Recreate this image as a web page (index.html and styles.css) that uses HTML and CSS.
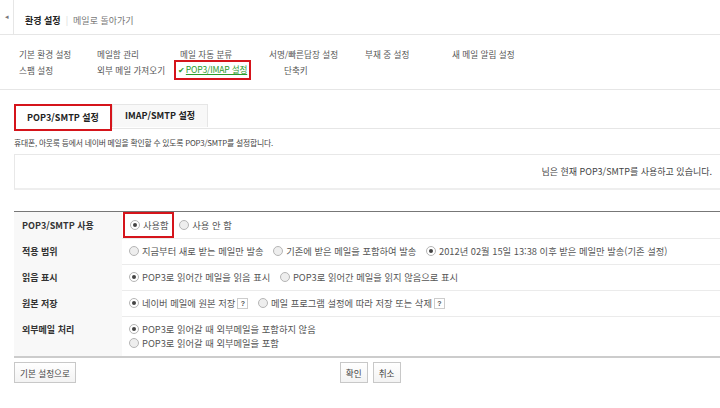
FILE: index.html
```html
<!DOCTYPE html>
<html lang="ko">
<head>
  <meta charset="UTF-8" />
  <title>환경 설정 - POP3/IMAP 설정</title>
  <link rel="stylesheet" href="styles.css">
</head>
<body>

  <!-- 상단 제목 -->
  <div class="top">
    <div class="back">&#9666;</div>
    <div class="title">
      <strong>환경 설정</strong>
      <span class="bar">|</span>
      <a href="#">메일로 돌아가기</a>
    </div>
  </div>

  <!-- 설정 메뉴 -->
  <div class="menu">
    <a href="#">기본 환경 설정</a>
    <a href="#">메일함 관리</a>
    <a href="#">메일 자동 분류</a>
    <a href="#">서명/빠른답장 설정</a>
    <a href="#">부재 중 설정</a>
    <a href="#">새 메일 알림 설정</a>
    <a href="#">스팸 설정</a>
    <a href="#">외부 메일 가져오기</a>
    <a href="#" class="current"><span class="check">&#10004;</span><u>POP3/IMAP 설정</u></a>
    <a href="#" class="shortcut">단축키</a>
  </div>

  <div class="content">
    <div class="tabs">
      <a href="#" class="tab on">POP3/SMTP 설정</a>
      <a href="#" class="tab">IMAP/SMTP 설정</a>
    </div>

    <p class="desc">휴대폰, 아웃룩 등에서 네이버 메일을 확인할 수 있도록 POP3/SMTP를 설정합니다.</p>

    <div class="status">님은 현재 POP3/SMTP를 사용하고 있습니다.</div>

    <table class="setting">
      <tr>
        <th>POP3/SMTP 사용</th>
        <td>
          <label class="opt marked"><span class="radio on"></span>사용함</label>
          <label class="opt"><span class="radio"></span>사용 안 함</label>
        </td>
      </tr>
      <tr>
        <th>적용 범위</th>
        <td>
          <label class="opt"><span class="radio"></span>지금부터 새로 받는 메일만 발송</label>
          <label class="opt"><span class="radio"></span>기존에 받은 메일을 포함하여 발송</label>
          <label class="opt"><span class="radio on"></span>2012년 02월 15일 13:38 이후 받은 메일만 발송(기존 설정)</label>
        </td>
      </tr>
      <tr>
        <th>읽음 표시</th>
        <td>
          <label class="opt"><span class="radio on"></span>POP3로 읽어간 메일을 읽음 표시</label>
          <label class="opt"><span class="radio"></span>POP3로 읽어간 메일을 읽지 않음으로 표시</label>
        </td>
      </tr>
      <tr>
        <th>원본 저장</th>
        <td>
          <label class="opt"><span class="radio on"></span>네이버 메일에 원본 저장<span class="help">?</span></label>
          <label class="opt"><span class="radio"></span>메일 프로그램 설정에 따라 저장 또는 삭제<span class="help">?</span></label>
        </td>
      </tr>
      <tr class="tall">
        <th>외부메일 처리</th>
        <td>
          <label class="opt line"><span class="radio on"></span>POP3로 읽어갈 때 외부메일을 포함하지 않음</label>
          <label class="opt line"><span class="radio"></span>POP3로 읽어갈 때 외부메일을 포함</label>
        </td>
      </tr>
    </table>

    <div class="buttons">
      <button class="btn">기본 설정으로</button>
      <div class="center">
        <button class="btn">확인</button>
        <button class="btn">취소</button>
      </div>
    </div>
  </div>

</body>
</html>
```

FILE: styles.css
```css
/* 기본 */
body {
  margin: 0;
  background: #fff;
  font-family: "Noto Sans CJK KR", "Noto Sans", sans-serif;
  font-size: 9px;
  color: #333;
  overflow: hidden;
}

a {
  color: #555;
  text-decoration: none;
}

/* 상단 제목 */
.top {
  display: flex;
  height: 34px;
  border-bottom: 1px solid #e6e6e6;
}

.back {
  width: 13px;
  border-right: 1px solid #e6e6e6;
  color: #777;
  font-size: 7px;
  line-height: 32px;
  text-align: center;
}

.title {
  display: flex;
  align-items: center;
  padding: 6px 0 0 11px;
  font-size: 9px;
}

.title strong {
  color: #222;
}

.title .bar {
  color: #d8d8d8;
  margin: 0 5px;
}

.title a {
  color: #777;
}

/* 설정 메뉴 */
.menu {
  display: grid;
  grid-template-columns: 78px 83px 89px 96px 87px auto;
  grid-auto-rows: 16px;
  align-items: center;
  padding: 11px 0 11px 19px;
  border-bottom: 1px solid #e6e6e6;
  font-size: 8.6px;
}

.menu a {
  color: #555;
  white-space: nowrap;
}

.menu .current {
  justify-self: start;
  margin-left: -6px;
  padding: 1px 2px 2px 2px;
  border: 2px solid #d5141b;
  color: #2b9b2b;
  line-height: 13px;
  letter-spacing: -0.2px;
}

.menu .check {
  font-size: 8px;
  margin-right: 1px;
}

.menu .shortcut {
  padding-left: 15px;
}

/* 본문 */
.content {
  padding: 14px 0 0 14px;
}

.tabs {
  display: flex;
  height: 24px;
  border-bottom: 1px solid #e6e6e6;
  margin-bottom: 8px;
}

.tab {
  width: 94px;
  height: 22px;
  line-height: 22px;
  text-align: center;
  font-weight: bold;
  color: #222;
  font-size: 9px;
  background: #f8f8f8;
  border: 1px solid #e6e6e6;
  border-bottom: none;
}

.tab.on {
  width: 94px;
  background: #fff;
  border: 2px solid #d5141b;
  height: 23px;
  line-height: 23px;
  position: relative;
  z-index: 1;
}

.desc {
  margin: 0 0 6px;
  font-size: 7.8px;
  color: #444;
  letter-spacing: -0.2px;
}

.status {
  height: 33px;
  line-height: 33px;
  border: 1px solid #e8e8e8;
  border-right: none;
  border-bottom: 2px solid #eee;
  text-align: right;
  padding-right: 8px;
  color: #444;
  margin-bottom: 21px;
}

/* 설정 표 */
.setting {
  width: 100%;
  border-collapse: collapse;
  border-top: 1px solid #777;
  border-bottom: 2px solid #ccc;
}

.setting th {
  width: 100px;
  background: #f8f8f8;
  text-align: left;
  padding: 0 0 0 8px;
  font-size: 9px;
  color: #333;
  vertical-align: middle;
}

.setting tr.tall th {
  vertical-align: top;
  padding-top: 6px;
}

.setting td {
  height: 25px;
  padding: 0 0 0 7px;
  border-bottom: 1px solid #ebebeb;
  color: #555;
  font-size: 9.3px;
  white-space: nowrap;
}

.setting tr:last-child td,
.setting tr:last-child th {
  border-bottom: none;
}

.setting tr.tall td {
  height: 34px;
  vertical-align: top;
  padding-top: 5px;
}

.opt {
  display: inline-flex;
  align-items: center;
  margin-right: 7px;
}

.opt.line {
  display: flex;
  height: 14px;
}

.opt.marked {
  margin-left: -6px;
  padding: 4px 3px 4px 5px;
  border: 2px solid #d5141b;
  margin-right: 3px;
}

.radio {
  display: inline-block;
  width: 8px;
  height: 8px;
  border: 1px solid #b5b5b5;
  border-radius: 50%;
  background: #eee;
  margin-right: 3px;
  position: relative;
}

.radio.on {
  background: #fff;
}

.radio.on::after {
  content: "";
  position: absolute;
  left: 2px;
  top: 2px;
  width: 4px;
  height: 4px;
  border-radius: 50%;
  background: #444;
}

.help {
  display: inline-block;
  width: 9px;
  height: 9px;
  line-height: 9px;
  margin-left: 2px;
  border: 1px solid #ccc;
  text-align: center;
  font-size: 7px;
  font-weight: bold;
  color: #555;
  font-family: "Liberation Sans", sans-serif;
}

/* 버튼 */
.buttons {
  display: flex;
  align-items: flex-start;
  padding-top: 4px;
}

.buttons .center {
  display: flex;
  gap: 5px;
  margin-left: 264px;
}

.btn {
  height: 21px;
  padding: 0 5px;
  background: linear-gradient(#fff, #f3f3f3);
  border: 1px solid #c8c8c8;
  font-family: inherit;
  font-size: 8.6px;
  color: #444;
  cursor: pointer;
}
```
